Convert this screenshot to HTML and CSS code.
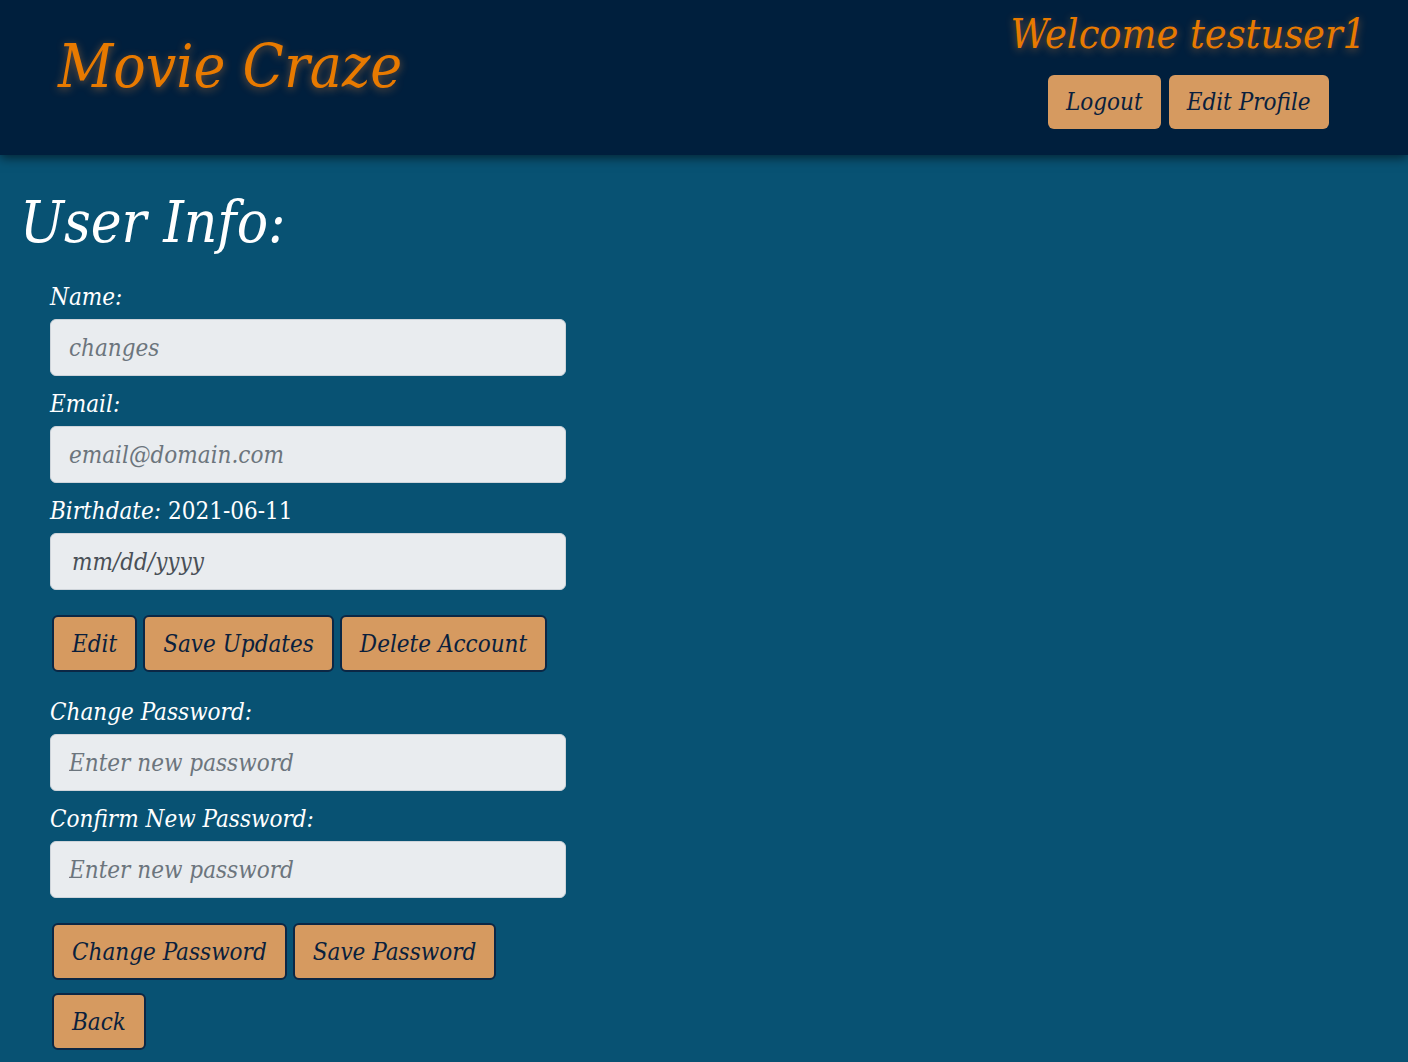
FILE: index.html
```html
<!DOCTYPE html>
<html lang="en">
<head>
<meta charset="utf-8">
<title>Movie Craze</title>
<link rel="stylesheet" href="styles.css">
</head>
<body>
<header class="topbar">
  <div class="brand">Movie Craze</div>
  <div class="account">
    <div class="welcome">Welcome testuser1</div>
    <div class="account-actions">
      <button class="btn btn-top">Logout</button>
      <button class="btn btn-top">Edit Profile</button>
    </div>
  </div>
</header>
<main class="content">
  <h1 class="page-title">User Info:</h1>
  <form class="user-form">
    <div class="field">
      <label class="label">Name:</label>
      <input class="input" type="text" placeholder="changes">
    </div>
    <div class="field">
      <label class="label">Email:</label>
      <input class="input" type="text" placeholder="email@domain.com">
    </div>
    <div class="field">
      <label class="label">Birthdate: <span class="value">2021-06-11</span></label>
      <input class="input input-date" type="text" placeholder="mm/dd/yyyy">
    </div>
    <div class="btn-row row-first">
      <button type="button" class="btn btn-form">Edit</button>
      <button type="button" class="btn btn-form">Save Updates</button>
      <button type="button" class="btn btn-form">Delete Account</button>
    </div>
    <div class="field field-pw">
      <label class="label">Change Password:</label>
      <input class="input" type="password" placeholder="Enter new password">
    </div>
    <div class="field">
      <label class="label">Confirm New Password:</label>
      <input class="input" type="password" placeholder="Enter new password">
    </div>
    <div class="btn-row row-first">
      <button type="button" class="btn btn-form">Change Password</button>
      <button type="button" class="btn btn-form">Save Password</button>
    </div>
    <div class="btn-row row-back">
      <button type="button" class="btn btn-form">Back</button>
    </div>
  </form>
</main>
</body>
</html>
```
FILE: styles.css
```css
* { box-sizing: border-box; }
html, body { margin: 0; padding: 0; }
body {
  background: #085273;
  font-family: "DejaVu Serif Condensed", "DejaVu Serif", serif;
  font-stretch: condensed;
  font-style: italic;
  color: #ffffff;
  height: 1062px;
  overflow: hidden;
}
.topbar {
  height: 155px;
  background: #001f3d;
  box-shadow: 0 3px 10px rgba(0, 0, 0, 0.55);
  display: flex;
  justify-content: space-between;
  align-items: flex-start;
  position: relative;
  z-index: 1;
}
.brand {
  margin-left: 58px;
  margin-top: 30px;
  font-size: 60px;
  line-height: 72px;
  color: #e87a00;
  text-shadow: 0 2px 8px rgba(255, 150, 60, 0.45);
}
.account {
  margin-right: 42px;
  margin-top: 7px;
  display: flex;
  flex-direction: column;
  align-items: center;
}
.welcome {
  font-size: 41px;
  line-height: 54px;
  color: #e87a00;
  text-shadow: 0 2px 8px rgba(255, 150, 60, 0.45);
}
.account-actions {
  display: flex;
  gap: 8px;
  margin-top: 14px;
}
.btn {
  font-family: "DejaVu Serif Condensed", "DejaVu Serif", serif;
  font-stretch: condensed;
  font-style: italic;
  font-size: 24px;
  color: #0a1f3d;
  background: #d69a60;
  border-radius: 6px;
  cursor: pointer;
  white-space: nowrap;
  flex: none;
}
.btn-top {
  height: 54px;
  padding: 0 18px;
  border: none;
}
.content {
  padding-left: 20px;
}
.page-title {
  margin: 31px 0 0 0;
  font-size: 58px;
  line-height: 72px;
  font-weight: normal;
}
.user-form {
  margin: 21px 0 0 30px;
  width: 516px;
}
.field {
  display: flex;
  flex-direction: column;
  margin-bottom: 10px;
}
.label {
  font-size: 24px;
  line-height: 36px;
  margin-bottom: 4px;
}
.value { font-style: normal; }
.input {
  height: 57px;
  width: 516px;
  background: #e9ecef;
  border: 1px solid #ced4da;
  border-radius: 6px;
  padding: 0 18px;
  font-family: "DejaVu Serif Condensed", "DejaVu Serif", serif;
  font-stretch: condensed;
  font-style: italic;
  font-size: 24px;
  color: #495057;
}
.input::placeholder { color: #6c757d; }
.input-date::placeholder { color: #495057; }
.input-date { padding-left: 21px; }
.btn-row {
  display: flex;
  gap: 6px;
  padding-left: 2px;
}
.row-first { margin-top: 25px; }
.row-back { margin-top: 13px; }
.field-pw { margin-top: 22px; }
.btn-form {
  height: 57px;
  padding: 0 18px;
  border: 2px solid #0b2745;
}
```
